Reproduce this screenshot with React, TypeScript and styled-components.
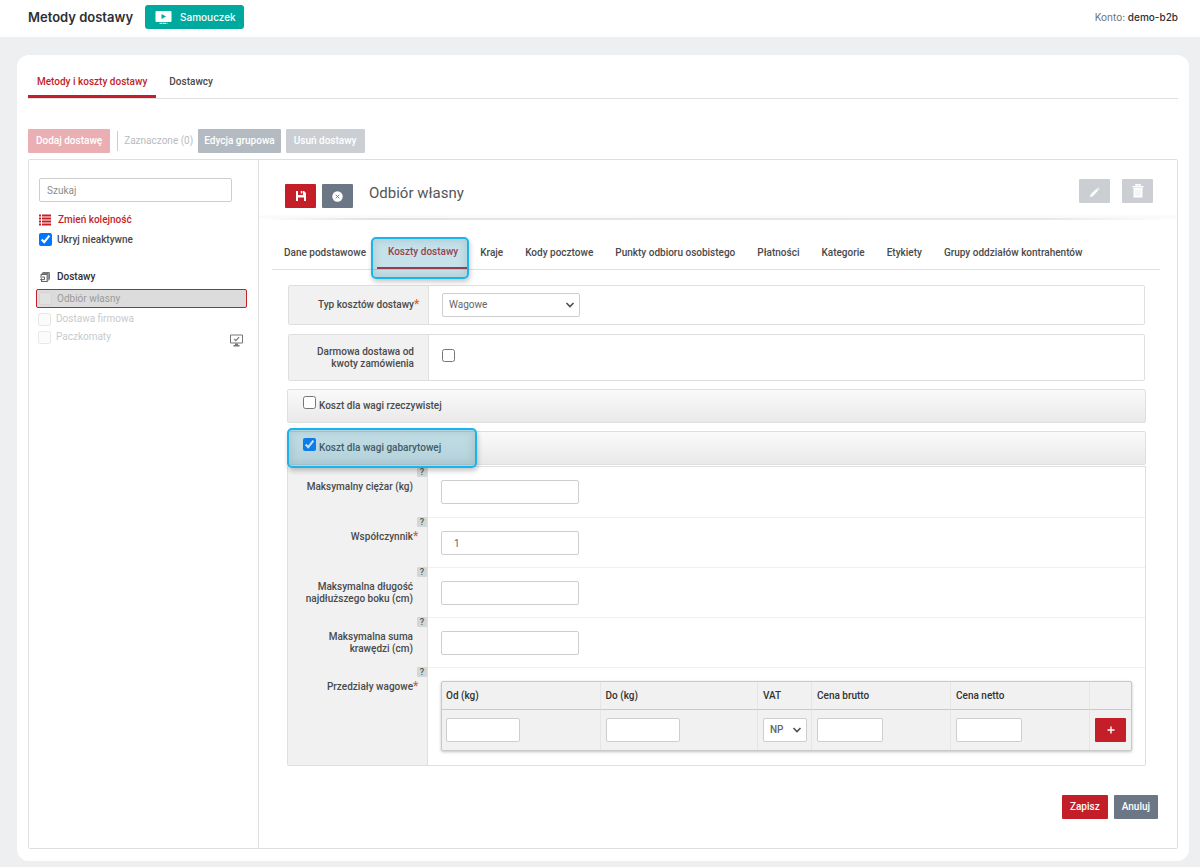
import React from "react";
import styled, { createGlobalStyle, css } from "styled-components";

const red = "#c41e28";
const slate = "#6c7786";
const line = "#dedfe0";

const GlobalStyle = createGlobalStyle`
  *, *::before, *::after { box-sizing: border-box; }
  body {
    margin: 0;
    background: #eeeff1;
    color: #4a4a4a;
    font-family: Roboto, "Liberation Sans", sans-serif;
    font-size: 10px;
    line-height: 12px;
  }
  button, input, select { font: inherit; color: inherit; margin: 0; }
  h1, h2 { margin: 0; font-weight: 400; }
  a { color: inherit; text-decoration: none; }
`;

const Header = styled.header`
  display: flex;
  align-items: center;
  gap: 12px;
  height: 37px;
  padding: 0 22px 3px 28px;
  background: #fff;
`;

const PageTitle = styled.h1`
  color: #2d2f33;
  font-size: 13px;
  line-height: 18px;
  font-weight: 600;
  font-family: Inter, sans-serif;
`;

const TutorialButton = styled.button`
  display: flex;
  align-items: center;
  gap: 8px;
  height: 24px;
  padding: 0 8px 0 10px;
  border: 0;
  border-radius: 3px;
  background: #00a99d;
  color: #fff;
  font-family: Inter, sans-serif;
  font-weight: 500;
`;

const Account = styled.div`
  margin-left: auto;
  color: #6b7280;
  font-family: Inter, sans-serif;
  strong { color: #2d2f33; font-weight: 500; }
`;

const Page = styled.main`
  padding: 18px 11px 7px 17px;
`;

const Card = styled.section`
  padding: 12px 11px;
  border-radius: 12px;
  background: #fff;
`;

const MainTabs = styled.nav`
  display: flex;
  gap: 4px;
  border-bottom: 1px solid ${line};
`;

const MainTab = styled.a<{ $active?: boolean }>`
  height: 31px;
  padding: 9px 9px 0;
  font-weight: 500;
  ${(p) =>
    p.$active &&
    css`
      border-bottom: 3px solid ${red};
      color: ${red};
    `}
`;

const Button = styled.button<{ $tone: "red" | "slate"; $square?: boolean }>`
  display: inline-flex;
  align-items: center;
  justify-content: center;
  height: 24px;
  ${(p) => (p.$square ? "width: 31px;" : "")}
  padding: ${(p) => (p.$square ? "0" : "0 8px")};
  border: 0;
  border-radius: 1px;
  background: ${(p) => (p.$tone === "red" ? red : slate)};
  color: #fff;
  font-weight: 500;
  &:disabled { opacity: 0.35; }
`;

const Toolbar = styled.div`
  display: flex;
  align-items: center;
  gap: 5px;
  margin: 30px 0 6px;
`;

const GroupEdit = styled(Button)`
  padding: 0 6px;
  &:disabled { opacity: 0.5; }
`;

const Selected = styled.span`
  margin-left: 2px;
  padding: 4px 0 4px 6px;
  border-left: 1px solid #c9ccd0;
  color: #b9bbbe;
`;

const Panel = styled.div`
  display: grid;
  grid-template-columns: 230px minmax(0, 1fr);
  border: 1px solid ${line};
  border-radius: 2px;
`;

const Sidebar = styled.aside`
  padding: 18px 11px 0 10px;
  border-right: 1px solid ${line};
`;

const fieldBox = css`
  height: 24px;
  border: 1px solid #ccced0;
  border-radius: 2px;
  background: #fff;
  color: #666;
  outline: 0;
`;

const Search = styled.input`
  ${fieldBox}
  display: block;
  width: 193px;
  padding: 0 7px;
  &::placeholder { color: #8b8d90; opacity: 1; }
`;

const Reorder = styled.a`
  display: flex;
  align-items: center;
  gap: 7px;
  margin-top: 12px;
  color: ${red};
  font-weight: 500;
`;

const Check = styled.input.attrs({ type: "checkbox" })`
  flex: none;
  width: 13px;
  height: 13px;
`;

const CheckLabel = styled.label`
  display: flex;
  align-items: center;
  gap: 5px;
  margin-top: 7px;
  font-weight: 500;
`;

const GroupTitle = styled.h2`
  display: flex;
  align-items: center;
  gap: 6px;
  margin: 25px 0 6px;
  color: #2d2f33;
  font-size: 10px;
  line-height: 12px;
  font-weight: 500;
`;

const DeliveryList = styled.ul`
  margin: 0 0 0 -3px;
  padding: 0;
  list-style: none;
`;

const Delivery = styled.li<{ $active?: boolean }>`
  display: flex;
  align-items: center;
  height: 18px;
  padding: 0 4px 0 2px;
  color: #c9cacc;
  label { display: flex; align-items: center; gap: 5px; }
  input { opacity: 0.5; }
  svg { align-self: flex-end; margin: 0 0 -1px auto; }
  ${(p) =>
    p.$active &&
    css`
      height: 19px;
      margin-bottom: 2px;
      border: 1px solid ${red};
      border-radius: 2px;
      background: #dcdcdc;
      color: #9b9b9b;
      input { opacity: 0.3; }
    `}
`;

const Content = styled.div`
  min-width: 0;
`;

const Heading = styled.div`
  display: flex;
  align-items: center;
  height: 60px;
  padding: 0 24px 0 26px;
  gap: 6px;
  border-bottom: 2px solid;
  border-image: linear-gradient(to right, #fff, #e3e3e3 12%, #e8e8e8 86%, #fff) 1;
  background: linear-gradient(to top, #f8f8f8, #fff 4px);
`;

const SaveGroup = styled.div`
  display: flex;
  gap: 6px;
  margin-top: 14px;
`;

const ItemTitle = styled.h2`
  margin: 8px auto 0 10px;
  color: #555;
  font-size: 15px;
  line-height: 18px;
`;

const EditGroup = styled.div`
  display: flex;
  gap: 12px;
  margin-top: 4px;
`;

const SubTabs = styled.nav`
  display: flex;
  height: 50px;
  margin: 0 17px 0 13px;
  padding-left: 1px;
  border-bottom: 1px solid ${line};
`;

const SubTab = styled.a<{ $active?: boolean }>`
  position: relative;
  height: 49px;
  padding: 27px 11px 0;
  font-weight: 500;
  white-space: nowrap;
  ${(p) =>
    p.$active &&
    css`
      padding-top: 26px;
      color: ${red};
      &::before {
        content: "";
        position: absolute;
        inset: auto 0 0;
        height: 2px;
        background: ${red};
      }
    `}
`;

const Highlight = styled.span<{ $inset: string }>`
  position: absolute;
  z-index: 1;
  inset: ${(p) => p.$inset};
  border: 2px solid #19b5ea;
  border-radius: 5px;
  background: rgba(40, 144, 178, 0.27);
  box-shadow: inset 0 0 6px 3px rgba(60, 100, 110, 0.13), 1px 3px 5px rgba(0, 0, 0, 0.22);
  pointer-events: none;
`;

const Form = styled.form`
  padding: 15px 31px 0 28px;
`;

const Row = styled.div<{ $tall?: boolean }>`
  display: grid;
  grid-template-columns: 140px minmax(0, 1fr);
  min-height: ${(p) => (p.$tall ? 47 : 40)}px;
  margin: 0 1px ${(p) => (p.$tall ? 8 : 9)}px;
  border: 1px solid ${line};
  border-radius: 2px;
`;

const Label = styled.label`
  display: block;
  font-weight: 500;
`;

const RowLabel = styled.div`
  display: flex;
  align-items: center;
  justify-content: flex-end;
  padding: 0 14px 0 20px;
  border-right: 1px solid ${line};
  background: #f1f1f1;
  text-align: right;
`;

const RowValue = styled.div<{ $top?: boolean }>`
  display: flex;
  align-items: ${(p) => (p.$top ? "flex-start" : "center")};
  padding: ${(p) => (p.$top ? "14px" : "0")} 13px 0;
`;

const Star = styled.sup`
  width: 0;
  display: inline-block;
  color: #d9622b;
  font-size: 12px;
  line-height: 0;
  vertical-align: 0;
  font-weight: 500;
`;

const arrow =
  "data:image/svg+xml,%3Csvg xmlns='http://www.w3.org/2000/svg' width='10' height='6' viewBox='0 0 10 6'%3E%3Cpath d='M1.500 1l3.500 3.500L8.500 1' fill='none' stroke='%23505050' stroke-width='1.600'/%3E%3C/svg%3E";

const Select = styled.select<{ $small?: boolean }>`
  ${fieldBox}
  width: ${(p) => (p.$small ? "44px" : "138px")};
  padding: 0 6px;
  appearance: none;
  background: #fff url("${arrow}") no-repeat right 4px center;
  font-weight: ${(p) => (p.$small ? 500 : 400)};
`;

const Bar = styled.div`
  position: relative;
  display: flex;
  height: 34px;
  margin-bottom: 8px;
  padding: 6px 15px;
  border: 1px solid ${line};
  border-radius: 2px;
  background: linear-gradient(#fafafa, #e9e9e9);
  label { display: flex; gap: 3px; font-weight: 500; }
  span { padding-top: 4px; }
`;

const Group = styled.div`
  border: 1px solid ${line};
  border-radius: 0 0 2px 2px;
`;

const GroupBar = styled(Bar)`
  margin-bottom: 1px;
`;

const Field = styled.div<{ $last?: boolean }>`
  display: grid;
  grid-template-columns: 140px minmax(0, 1fr);
  min-height: ${(p) => (p.$last ? 98 : 50)}px;
`;

const FieldLabel = styled.div`
  position: relative;
  padding: 14px 14px 0 16px;
  border-right: 1px solid ${line};
  background: #f1f1f1;
  text-align: right;
`;

const Help = styled.button`
  position: absolute;
  top: 0;
  right: 0;
  width: 10px;
  height: 10px;
  padding: 0;
  border: 0;
  border-radius: 1px;
  background: #d5d7d7;
  color: #555;
  font-size: 9px;
  line-height: 10px;
  font-weight: 500;
`;

const FieldValue = styled.div`
  padding: 13px 13px 0;
  ${Field} + ${Field} > & { border-top: 1px solid #efefef; }
`;

const TextInput = styled.input<{ $w: number }>`
  ${fieldBox}
  display: block;
  width: ${(p) => p.$w}px;
  padding: 0 12px;
`;

const Ranges = styled.table`
  width: 100%;
  table-layout: fixed;
  border: 1px solid #c9c9c9;
  border-radius: 2px;
  border-spacing: 0;
  background: #f1f1f1;
  box-shadow: 0 1px 3px rgba(0, 0, 0, 0.25);
  th, td {
    padding: 0 5px;
    border-left: 1px solid #e6e6e6;
    text-align: left;
  }
  th:first-child, td:first-child { padding-left: 4px; border-left: 0; }
  th { height: 28px; border-bottom: 1px solid #c9c9c9; color: #333; font-weight: 500; }
  td { height: 40px; }
  td > * { vertical-align: top; }
`;

const Column = styled.col<{ $w?: number }>`
  width: ${(p) => (p.$w ? `${p.$w}px` : "auto")};
`;

const Actions = styled.div`
  display: flex;
  justify-content: flex-end;
  gap: 6px;
  padding: 29px 19px 29px 0;
`;

const SaveIcon = () => (
  <svg width="10" height="10" viewBox="0 0 10 10" fill="#fff">
    <path d="M0 0h2v4h5V0h1l2 2v8H8V6.500H2V10H0zM4.800 0h1.600v2.600H4.800z" />
  </svg>
);
const CancelIcon = () => (
  <svg width="11" height="11" viewBox="0 0 11 11">
    <circle cx="5.500" cy="5.500" r="5.200" fill="#fff" />
    <path d="M3.700 3.700l3.600 3.600M7.300 3.700L3.700 7.300" stroke={slate} strokeWidth="0.900" />
  </svg>
);
const PencilIcon = () => (
  <svg width="12" height="12" viewBox="0 0 12 12">
    <path d="M2.500 10.500l5.800-5.800" stroke="#fff" strokeWidth="2.600" />
    <path d="M8.900 4.100l.8-.8" stroke="#fff" strokeWidth="2.600" strokeLinecap="butt" />
    <path d="M1 12l.4-2.600 2.200 2.200z" fill="#fff" />
  </svg>
);
const TrashIcon = () => (
  <svg width="12" height="14" viewBox="0 0 12 14" fill="none">
    <path d="M1.500 4h9v9.500h-9z" fill="#fff" />
    <path d="M.5 2.800h11M4 2V.8h4V2" stroke="#fff" strokeWidth="1.400" />
    <path d="M4 5.500v6.500M6 5.500v6.500M8 5.500v6.500" stroke="#9aa2ac" strokeWidth=".6" />
  </svg>
);
const VideoIcon = () => (
  <svg width="17" height="13" viewBox="0 0 17 13">
    <rect x=".5" width="16" height="11" rx="1" fill="#fff" />
    <path d="M6.500 3l4.500 2.500L6.500 8z" fill="#00a99d" />
    <path d="M4.500 12.300h8" stroke="#fff" strokeDasharray="3 .6" />
  </svg>
);
const ListIcon = () => (
  <svg width="12" height="12" viewBox="0 0 12 12" stroke={red} strokeWidth="2">
    <path d="M0 1.500h2M3 1.500h9M0 4.500h2M3 4.500h9M0 7.500h2M3 7.500h9M0 10.500h2M3 10.500h9" />
  </svg>
);
const BoxesIcon = () => (
  <svg width="12" height="12" viewBox="0 0 12 12" fill="none" stroke="#666">
    <path d="M2.500 2.500L4 1h7l-1.500 2h-7z" fill="#777" stroke="none" />
    <path d="M11 1.500v6.500L9.200 10V3.500z" fill="#777" stroke="none" />
    <path d="M2.200 5V3.500h6v7h-5.500V9.500" strokeWidth="1.200" />
    <path d="M1 6h4.500v2.600H1.500M3 7.200L1.500 8.600 3 10" />
  </svg>
);
const MonitorIcon = () => (
  <svg width="13" height="13" viewBox="0 0 13 13" fill="none" stroke="#777">
    <path d="M.5 1h12v8H.5z" />
    <path d="M4.200 5l1.700 1.700L9 3.200" strokeWidth="1.200" />
    <path d="M5 9.500h3v1.500h1.500v1.500h-6V11H5z" fill="#777" stroke="none" />
  </svg>
);
const PlusIcon = () => (
  <svg width="8" height="8" viewBox="0 0 8 8" stroke="#fff" strokeWidth="1.400">
    <path d="M4 .5v7M.5 4h7" />
  </svg>
);

const subTabs = [
  "Dane podstawowe",
  "Koszty dostawy",
  "Kraje",
  "Kody pocztowe",
  "Punkty odbioru osobistego",
  "Płatności",
  "Kategorie",
  "Etykiety",
  "Grupy oddziałów kontrahentów",
];

type FormFieldProps = {
  id: string;
  label: string;
  required?: boolean;
  last?: boolean;
  children: React.ReactNode;
};

const FormField = ({ id, label, required, last, children }: FormFieldProps) => (
  <Field $last={last}>
    <FieldLabel>
      <Help type="button">?</Help>
      <Label htmlFor={id}>
        {label}
        {required && <Star>*</Star>}
      </Label>
    </FieldLabel>
    <FieldValue>{children}</FieldValue>
  </Field>
);

export default function App() {
  return (
    <>
      <GlobalStyle />
      <Header>
        <PageTitle>Metody dostawy</PageTitle>
        <TutorialButton type="button">
          <VideoIcon />
          Samouczek
        </TutorialButton>
        <Account>
          Konto: <strong>demo-b2b</strong>
        </Account>
      </Header>
      <Page>
        <Card>
          <MainTabs>
            <MainTab href="#metody" $active>Metody i koszty dostawy</MainTab>
            <MainTab href="#dostawcy">Dostawcy</MainTab>
          </MainTabs>
          <Toolbar>
            <Button type="button" $tone="red" disabled>Dodaj dostawę</Button>
            <Selected>Zaznaczone (0)</Selected>
            <GroupEdit type="button" $tone="slate" disabled>Edycja grupowa</GroupEdit>
            <Button type="button" $tone="slate" disabled>Usuń dostawy</Button>
          </Toolbar>
          <Panel>
            <Sidebar>
              <Search type="search" placeholder="Szukaj" aria-label="Szukaj" />
              <Reorder href="#kolejnosc">
                <ListIcon />
                Zmień kolejność
              </Reorder>
              <CheckLabel>
                <Check defaultChecked />
                Ukryj nieaktywne
              </CheckLabel>
              <GroupTitle>
                <BoxesIcon />
                Dostawy
              </GroupTitle>
              <DeliveryList>
                <Delivery $active>
                  <label><Check disabled />Odbiór własny</label>
                </Delivery>
                <Delivery>
                  <label><Check disabled />Dostawa firmowa</label>
                </Delivery>
                <Delivery>
                  <label><Check disabled />Paczkomaty</label>
                  <MonitorIcon />
                </Delivery>
              </DeliveryList>
            </Sidebar>
            <Content>
              <Heading>
                <SaveGroup>
                  <Button type="submit" form="koszty" $tone="red" $square aria-label="Zapisz"><SaveIcon /></Button>
                  <Button type="button" $tone="slate" $square aria-label="Anuluj"><CancelIcon /></Button>
                </SaveGroup>
                <ItemTitle>Odbiór własny</ItemTitle>
                <EditGroup>
                  <Button type="button" $tone="slate" $square disabled aria-label="Edytuj"><PencilIcon /></Button>
                  <Button type="button" $tone="slate" $square disabled aria-label="Usuń"><TrashIcon /></Button>
                </EditGroup>
              </Heading>
              <SubTabs>
                {subTabs.map((name, i) => (
                  <SubTab key={name} href={`#karta-${i}`} $active={i === 1}>
                    {name}
                    {i === 1 && <Highlight $inset="17px 0 -10px -6px" />}
                  </SubTab>
                ))}
              </SubTabs>
              <Form id="koszty" onSubmit={(e) => e.preventDefault()}>
                <Row>
                  <RowLabel>
                    <Label htmlFor="typ">Typ kosztów dostawy<Star>*</Star></Label>
                  </RowLabel>
                  <RowValue>
                    <Select id="typ" defaultValue="Wagowe">
                      <option>Wagowe</option>
                    </Select>
                  </RowValue>
                </Row>
                <Row $tall>
                  <RowLabel>
                    <Label htmlFor="darmowa">Darmowa dostawa od kwoty zamówienia</Label>
                  </RowLabel>
                  <RowValue $top>
                    <Check id="darmowa" />
                  </RowValue>
                </Row>
                <Bar>
                  <label><Check /><span>Koszt dla wagi rzeczywistej</span></label>
                </Bar>
                <GroupBar>
                  <label><Check defaultChecked /><span>Koszt dla wagi gabarytowej</span></label>
                  <Highlight $inset="-4px calc(100% - 189px) -4px -1px" />
                </GroupBar>
                <Group>
                  <FormField id="ciezar" label="Maksymalny ciężar (kg)">
                    <TextInput id="ciezar" $w={138} />
                  </FormField>
                  <FormField id="wspolczynnik" label="Współczynnik" required>
                    <TextInput id="wspolczynnik" $w={138} defaultValue="1" />
                  </FormField>
                  <FormField id="dlugosc" label="Maksymalna długość najdłuższego boku (cm)">
                    <TextInput id="dlugosc" $w={138} />
                  </FormField>
                  <FormField id="suma" label="Maksymalna suma krawędzi (cm)">
                    <TextInput id="suma" $w={138} />
                  </FormField>
                  <FormField id="od" label="Przedziały wagowe" required last>
                    <Ranges>
                      <colgroup>
                        <Column />
                        <Column />
                        <Column $w={54} />
                        <Column $w={139} />
                        <Column $w={139} />
                        <Column $w={42} />
                      </colgroup>
                      <thead>
                        <tr>
                          <th>Od (kg)</th>
                          <th>Do (kg)</th>
                          <th>VAT</th>
                          <th>Cena brutto</th>
                          <th>Cena netto</th>
                          <th />
                        </tr>
                      </thead>
                      <tbody>
                        <tr>
                          <td><TextInput id="od" $w={74} /></td>
                          <td><TextInput aria-label="Do (kg)" $w={74} /></td>
                          <td>
                            <Select $small aria-label="VAT" defaultValue="NP">
                              <option>NP</option>
                            </Select>
                          </td>
                          <td><TextInput aria-label="Cena brutto" $w={66} /></td>
                          <td><TextInput aria-label="Cena netto" $w={66} /></td>
                          <td>
                            <Button type="button" $tone="red" $square aria-label="Dodaj przedział"><PlusIcon /></Button>
                          </td>
                        </tr>
                      </tbody>
                    </Ranges>
                  </FormField>
                </Group>
              </Form>
              <Actions>
                <Button type="submit" form="koszty" $tone="red">Zapisz</Button>
                <Button type="button" $tone="slate">Anuluj</Button>
              </Actions>
            </Content>
          </Panel>
        </Card>
      </Page>
    </>
  );
}
